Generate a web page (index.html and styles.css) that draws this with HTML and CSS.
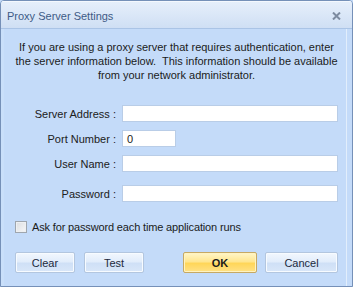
FILE: index.html
```html
<!DOCTYPE html>
<html>
<head>
<meta charset="utf-8">
<title>Proxy Server Settings</title>
<link rel="stylesheet" href="styles.css">
</head>
<body>
<div class="window">
  <div class="titlebar">
    <span class="title">Proxy Server Settings</span>
    <span class="close">
      <svg width="9" height="8" viewBox="0 0 9 8"><path d="M1 0.5 L8 7.5 M8 0.5 L1 7.5" stroke="#7d8ba0" stroke-width="2"/></svg>
    </span>
  </div>
  <div class="client">
    <p class="intro">If you are using a proxy server that requires authentication, enter<br>the server information below.&nbsp; This information should be available<br>from your network administrator.</p>
    <div class="form">
      <label class="lbl">Server Address :</label>
      <div class="field wide"></div>
      <label class="lbl">Port Number :</label>
      <div class="field port">0</div>
      <label class="lbl">User Name :</label>
      <div class="field wide"></div>
      <label class="lbl pw">Password :</label>
      <div class="field wide pw"></div>
    </div>
    <div class="check">
      <span class="box"></span>
      <span class="check-text">Ask for password each time application runs</span>
    </div>
    <div class="buttons">
      <div class="group">
        <button class="btn small">Clear</button>
        <button class="btn small">Test</button>
      </div>
      <div class="group">
        <button class="btn ok">OK</button>
        <button class="btn">Cancel</button>
      </div>
    </div>
  </div>
</div>
</body>
</html>
```

FILE: styles.css
```css
* { box-sizing: border-box; }
html, body { margin: 0; padding: 0; background: #c4dbf9; }
body { font-family: "Liberation Sans", Arial, sans-serif; font-size: 11px; color: #1b1b1b; }

.window {
  width: 353px;
  height: 287px;
  border: 1px solid #7590b8;
  border-radius: 4px 4px 0 0;
  background: #c4dbf9;
  display: flex;
  flex-direction: column;
  overflow: hidden;
}

.titlebar {
  height: 28px;
  flex: none;
  display: flex;
  align-items: center;
  justify-content: space-between;
  padding: 0 11px 0 6px;
  background: linear-gradient(#e6effb 0%, #dce8f8 45%, #cfdff4 100%);
  border-bottom: 1px solid #aac4e6;
  box-shadow: inset 0 1px 0 #f4f8fe;
}
.title { color: #3e5b86; font-size: 11px; padding-top: 3px; }
.close { display: flex; padding-top: 2px; }

.client {
  flex: 1;
  display: flex;
  flex-direction: column;
  padding: 0 8px 0 11px;
  border-left: 3px solid #c9dffa;
  border-right: 1px solid #e2eefc;
  margin-right: 5px;
}

.intro {
  margin: 11px -12px 0;
  text-align: center;
  line-height: 14px;
  color: #1b1b1b;
  white-space: nowrap;
}

.form {
  margin-top: 23px;
  display: grid;
  grid-template-columns: 101px auto;
  column-gap: 6px;
  row-gap: 8px;
  align-items: center;
}
.lbl { text-align: right; color: #202020; }
.field {
  height: 17px;
  background: #fff;
  border: 1px solid #b9cde7;
  padding: 1px 0 0 4px;
  line-height: 14px;
}
.field.wide { width: 216px; }
.field.port { width: 54px; }
.pw { margin-top: 5px; }

.check {
  margin-top: 19px;
  display: flex;
  align-items: center;
  gap: 5px;
}
.check-text { letter-spacing: -0.15px; }
.box {
  width: 12px;
  height: 12px;
  border: 1px solid #9fa6ae;
  background: linear-gradient(135deg, #dcdee1, #f6f7f8);
  box-shadow: inset 0 0 0 1px #eef0f2;
}

.buttons {
  margin-top: 19px;
  display: flex;
  justify-content: space-between;
}
.group { display: flex; gap: 9px; }
.group + .group { gap: 8px; }
.btn {
  font-family: "Liberation Sans", Arial, sans-serif;
  font-size: 11px;
  color: #1d2a3c;
  height: 21px;
  width: 73px;
  padding: 0;
  border: 1px solid #b3c6df;
  border-radius: 2px;
  background: linear-gradient(#f2f7fe 0%, #e2edfb 45%, #cfe0f6 55%, #d9e7f9 100%);
  box-shadow: inset 0 0 0 1px #f7fbff;
}
.btn.small { width: 60px; }
.btn.ok {
  width: 74px;
  font-weight: bold;
  color: #1b1b1b;
  border-color: #c6a964;
  background: linear-gradient(#fff6c8 0%, #ffe690 45%, #ffd659 55%, #ffe186 100%);
  box-shadow: inset 0 0 0 1px #fff3c0;
}
```
